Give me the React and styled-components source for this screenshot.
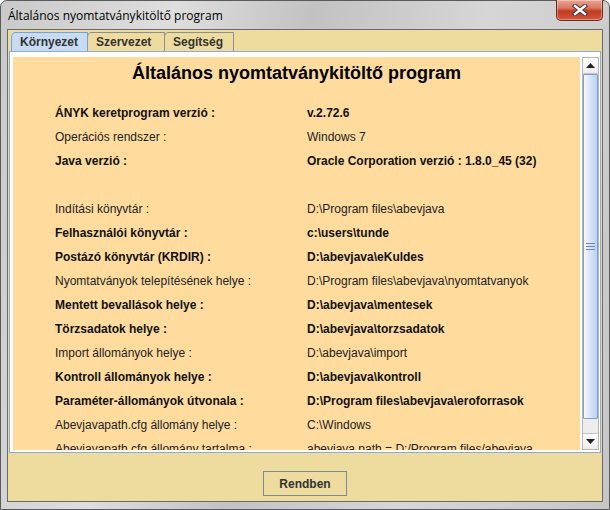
import styled, { createGlobalStyle } from "styled-components";

const GlobalStyle = createGlobalStyle`
  html, body { margin: 0; padding: 0; background: #ffffff; }
  body { font-family: "Liberation Sans", Arial, sans-serif; }
`;

const Frame = styled.div`
  width: 610px;
  height: 510px;
  box-sizing: border-box;
  display: flex;
  flex-direction: column;
  border: 1px solid #5a5a5a;
  border-radius: 7px 7px 0 0;
  background: linear-gradient(100deg, #c9c9c9 0%, #dedede 25%, #c2c2c2 45%, #d6d6d6 70%, #c6c6c6 100%);
  padding: 0 6px 7px 6px;
  position: relative;
`;

const TitleBar = styled.div`
  height: 28px;
  display: flex;
  align-items: center;
  padding-left: 1px;
  font-family: "Open Sans", "Noto Sans", sans-serif;
  font-size: 12px;
  color: #000;
`;

const CloseButton = styled.div`
  position: absolute;
  top: -1px;
  right: 6px;
  width: 47px;
  height: 21px;
  box-sizing: border-box;
  border: 1px solid #6b2a20;
  border-top: none;
  border-radius: 0 0 5px 5px;
  background: linear-gradient(#eba592 0%, #d9775f 40%, #c03a22 55%, #d4563c 100%);
  box-shadow: inset 0 0 0 1px rgba(255,255,255,0.35);
  display: flex;
  align-items: center;
  justify-content: center;
`;

const Client = styled.div`
  flex: 1;
  display: flex;
  flex-direction: column;
  border: 1px solid #6a6a6a;
  background: #eedc9f;
  padding: 2px 1px 0 1px;
`;

const TabRow = styled.div`
  display: flex;
  padding-left: 2px;
  height: 19px;
  align-items: flex-end;
`;

const Tab = styled.div`
  height: 19px;
  box-sizing: border-box;
  width: ${p => p.$w}px;
  padding-left: 8px;
  display: flex;
  align-items: center;
  font-weight: bold;
  font-size: 12px;
  color: #333;
  border: 1px solid ${p => (p.$active ? "#7b9fcf" : "#8e8e8e")};
  border-bottom: none;
  border-radius: 5px 1px 0 0;
  margin-right: -1px;
  background: ${p => (p.$active ? "#c7dbf3" : "#eedc9f")};
  position: relative;
  z-index: ${p => (p.$active ? 2 : 1)};
`;

const TabPanel = styled.div`
  height: 402px;
  box-sizing: border-box;
  border: 1px solid #8eaad8;
  background: #ffffff;
  padding: 5px 1px 2px 3px;
  display: flex;
  gap: 2px;
`;

const Viewport = styled.div`
  flex: 1;
  background: #ffdc9e;
  overflow: hidden;
  padding: 4px 0 0 42px;
  box-sizing: border-box;
`;

const Heading = styled.div`
  font-size: 18px;
  font-weight: bold;
  line-height: 24px;
  color: #000;
  text-align: center;
  margin-left: -42px;
  margin-bottom: 16px;
`;

const Row = styled.div`
  display: flex;
  height: 24px;
  align-items: center;
  font-size: 12px;
  font-weight: ${p => (p.$bold ? "bold" : "normal")};
  color: ${p => (p.$bold ? "#111" : "#222")};
  white-space: nowrap;
`;

const Label = styled.div`
  width: 252px;
  flex-shrink: 0;
`;

const ScrollBar = styled.div`
  width: 17px;
  display: flex;
  flex-direction: column;
  background: #ededed;
  border: 1px solid #b5b5b5;
  box-sizing: border-box;
`;

const ArrowButton = styled.div`
  height: 15px;
  display: flex;
  align-items: center;
  justify-content: center;
  background: linear-gradient(#ffffff, #ececec);
  border-bottom: ${p => (p.$top ? "1px solid #c4c4c4" : "none")};
  border-top: ${p => (p.$top ? "none" : "1px solid #c4c4c4")};
`;

const Track = styled.div`
  flex: 1;
  display: flex;
  flex-direction: column;
  padding-bottom: 14px;
`;

const Thumb = styled.div`
  flex: 1;
  border: 1px solid #7f9fd2;
  border-radius: 1px;
  background: linear-gradient(90deg, #f3f8ff 0%, #dbe8f9 40%, #bcd2f0 100%);
  display: flex;
  align-items: center;
  justify-content: center;
`;

const Grip = styled.div`
  width: 9px;
  height: 5px;
  border-top: 1px solid #6a86c4;
  border-bottom: 1px solid #6a86c4;
  position: relative;
  &::after {
    content: "";
    position: absolute;
    left: 0;
    right: 0;
    top: 2px;
    border-top: 1px solid #6a86c4;
  }
`;

const Footer = styled.div`
  flex: 1;
  display: flex;
  justify-content: center;
  align-items: flex-start;
  padding-top: 18px;
`;

const Button = styled.div`
  width: 84px;
  height: 25px;
  box-sizing: border-box;
  border: 1px solid #7a8a99;
  background: #eedc9f;
  display: flex;
  align-items: center;
  justify-content: center;
  font-size: 12px;
  font-weight: bold;
  color: #333;
`;

const Arrow = ({ up }) => (
  <svg width="9" height="5" viewBox="0 0 9 5">
    <path d={up ? "M0 5 L4.5 0 L9 5 Z" : "M0 0 L4.5 5 L9 0 Z"} fill="#222" />
  </svg>
);

const rows = [
  ["ÁNYK keretprogram verzió :", "v.2.72.6", true],
  ["Operációs rendszer :", "Windows 7", false],
  ["Java verzió :", "Oracle Corporation verzió : 1.8.0_45 (32)", true],
  ["", "", false],
  ["Indítási könyvtár :", "D:\\Program files\\abevjava", false],
  ["Felhasználói könyvtár :", "c:\\users\\tunde", true],
  ["Postázó könyvtár (KRDIR) :", "D:\\abevjava\\eKuldes", true],
  ["Nyomtatványok telepítésének helye :", "D:\\Program files\\abevjava\\nyomtatvanyok", false],
  ["Mentett bevallások helye :", "D:\\abevjava\\mentesek", true],
  ["Törzsadatok helye :", "D:\\abevjava\\torzsadatok", true],
  ["Import állományok helye :", "D:\\abevjava\\import", false],
  ["Kontroll állományok helye :", "D:\\abevjava\\kontroll", true],
  ["Paraméter-állományok útvonala :", "D:\\Program files\\abevjava\\eroforrasok", true],
  ["Abevjavapath.cfg állomány helye :", "C:\\Windows", false],
  ["Abevjavapath.cfg állomány tartalma :", "abevjava.path = D:/Program files/abevjava", false],
];

export default function App() {
  return (
    <>
      <GlobalStyle />
      <Frame>
        <TitleBar>Általános nyomtatványkitöltő program</TitleBar>
        <CloseButton>
          <svg width="16" height="12" viewBox="0 0 16 12">
            <path d="M3 2 L13 10 M13 2 L3 10" stroke="#3a3a3a" strokeWidth="4.4" strokeLinecap="square" />
            <path d="M3 2 L13 10 M13 2 L3 10" stroke="#ffffff" strokeWidth="2.4" strokeLinecap="square" />
          </svg>
        </CloseButton>
        <Client>
          <TabRow>
            <Tab $active $w={77}>Környezet</Tab>
            <Tab $w={78}>Szervezet</Tab>
            <Tab $w={70}>Segítség</Tab>
          </TabRow>
          <TabPanel>
            <Viewport>
              <Heading>Általános nyomtatványkitöltő program</Heading>
              {rows.map(([l, v, b], i) => (
                <Row key={i} $bold={b}>
                  <Label>{l}</Label>
                  <div>{v}</div>
                </Row>
              ))}
            </Viewport>
            <ScrollBar>
              <ArrowButton $top><Arrow up /></ArrowButton>
              <Track>
                <Thumb><Grip /></Thumb>
              </Track>
              <ArrowButton><Arrow /></ArrowButton>
            </ScrollBar>
          </TabPanel>
          <Footer>
            <Button>Rendben</Button>
          </Footer>
        </Client>
      </Frame>
    </>
  );
}
